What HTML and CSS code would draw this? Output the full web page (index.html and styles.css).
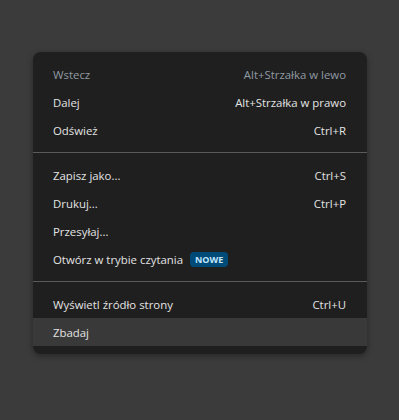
FILE: index.html
```html
<!DOCTYPE html>
<html lang="pl">

<head>
	<meta charset="UTF-8">
	<meta name="viewport" content="width=device-width, initial-scale=1.0">
	<title>Menu kontekstowe</title>
	<link rel="stylesheet" href="styles.css">
</head>

<body>
	<div class="menu">
		<div class="item disabled">
			<span class="label">Wstecz</span>
			<span class="shortcut">Alt+Strzałka w lewo</span>
		</div>
		<div class="item">
			<span class="label">Dalej</span>
			<span class="shortcut">Alt+Strzałka w prawo</span>
		</div>
		<div class="item">
			<span class="label">Odśwież</span>
			<span class="shortcut">Ctrl+R</span>
		</div>

		<div class="separator"></div>

		<div class="item">
			<span class="label">Zapisz jako...</span>
			<span class="shortcut">Ctrl+S</span>
		</div>
		<div class="item">
			<span class="label">Drukuj...</span>
			<span class="shortcut">Ctrl+P</span>
		</div>
		<div class="item">
			<span class="label">Przesyłaj...</span>
		</div>
		<div class="item">
			<span class="label">Otwórz w trybie czytania <span class="badge">NOWE</span></span>
		</div>

		<div class="separator"></div>

		<div class="item">
			<span class="label">Wyświetl źródło strony</span>
			<span class="shortcut">Ctrl+U</span>
		</div>
		<div class="item hover">
			<span class="label">Zbadaj</span>
		</div>
	</div>
</body>

</html>
```

FILE: styles.css
```css
:root {
	--page: #3b3b3b;
	--menu: #1f1f1f;
	--text: #e3e3e3;
	--muted: #8f9aa3;
	--line: #5a5a5a;
	--hover: #393939;
	--badge: #004a77;
	--badge-text: #c2e7ff;
}

* {
	box-sizing: border-box;
}

body {
	margin: 0;
	padding: 52px 32px 0 33px;
	min-height: 100vh;
	background: var(--page);
	font-family: 'Open Sans', 'Noto Sans', sans-serif;
	font-size: 11.4px;
	color: var(--text);
}

.menu {
	width: 334px;
	padding: 8px 0;
	background-color: var(--menu);
	border-radius: 8px;
	box-shadow: 0 2px 6px rgba(0, 0, 0, 0.35);
	overflow: hidden;
}

.item {
	display: flex;
	align-items: center;
	justify-content: space-between;
	height: 28px;
	padding: 0 21px 0 20px;
	cursor: default;
}

.item.hover {
	background-color: var(--hover);
}

.disabled {
	color: var(--muted);
}

.label {
	display: flex;
	align-items: center;
	gap: 7px;
}

.badge {
	display: inline-block;
	padding: 0 5px;
	height: 15px;
	line-height: 15px;
	border-radius: 4px;
	background-color: var(--badge);
	color: var(--badge-text);
	font-size: 9px;
	font-weight: 700;
}

.separator {
	height: 1px;
	margin: 8px 0;
	background-color: var(--line);
}
```
